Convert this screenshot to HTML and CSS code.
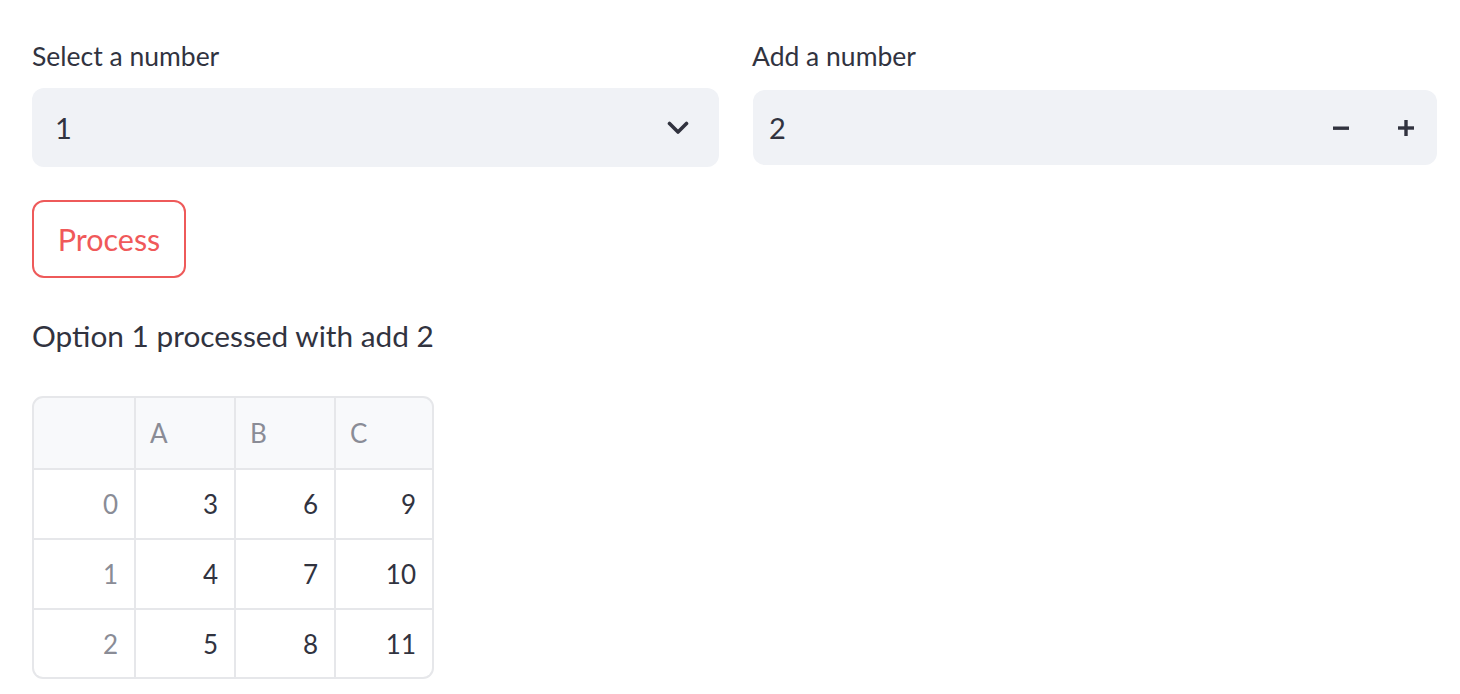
FILE: index.html
```html
<!DOCTYPE html>
<html>
<head>
<meta charset="utf-8">
<link rel="stylesheet" href="styles.css">
</head>
<body>
<div class="main">
  <div class="row">
    <div class="field">
      <div class="label">Select a number</div>
      <div class="select">
        <span class="value">1</span>
        <svg class="chev" width="22" height="14" viewBox="0 0 22 14"><path d="M2.5 2.5 L11 11 L19.5 2.5" fill="none" stroke="#31333f" stroke-width="3.6" stroke-linecap="round" stroke-linejoin="round"/></svg>
      </div>
    </div>
    <div class="field">
      <div class="label">Add a number</div>
      <div class="number">
        <span class="value">2</span>
        <div class="steps">
          <svg width="18" height="18" viewBox="0 0 18 18"><rect x="1" y="7.5" width="16" height="3.4" fill="#31333f"/></svg>
          <svg width="18" height="18" viewBox="0 0 18 18"><rect x="1" y="7.3" width="16" height="3.4" fill="#31333f"/><rect x="7.3" y="1" width="3.4" height="16" fill="#31333f"/></svg>
        </div>
      </div>
    </div>
  </div>
  <button class="btn">Process</button>
  <p class="result">Option 1 processed with add 2</p>
  <div class="table">
    <div class="hd"></div><div class="hd">A</div><div class="hd">B</div><div class="hd">C</div>
    <div class="idx">0</div><div class="num">3</div><div class="num">6</div><div class="num">9</div>
    <div class="idx">1</div><div class="num">4</div><div class="num">7</div><div class="num">10</div>
    <div class="idx">2</div><div class="num">5</div><div class="num">8</div><div class="num">11</div>
  </div>
</div>
</body>
</html>
```
FILE: styles.css
```css
html, body {
  margin: 0;
  background: #ffffff;
}
body {
  font-family: Lato, "Liberation Sans", sans-serif;
  color: #31333f;
}
.main {
  padding: 39px 23px 0 32px;
}
.row {
  display: grid;
  grid-template-columns: 687px 1fr;
  gap: 33px;
}
.field {
  display: flex;
  flex-direction: column;
}
.label {
  font-size: 26.5px;
  line-height: 34px;
  margin-bottom: 15px;
}
.select {
  height: 79px;
  background: #f0f2f6;
  border-radius: 12px;
  display: flex;
  align-items: center;
  padding: 0 30px 0 23px;
  box-sizing: border-box;
}
.number {
  height: 75px;
  margin-top: 2px;
  background: #f0f2f6;
  border-radius: 12px;
  display: flex;
  align-items: center;
  padding: 0 22px 0 16px;
  box-sizing: border-box;
  margin-left: 1px;
}
.value {
  flex: 1;
  font-size: 29px;
}
.steps {
  display: flex;
  gap: 47px;
}
.btn {
  display: block;
  margin-top: 33px;
  height: 78px;
  width: 154px;
  border: 2px solid #ee5a5a;
  border-radius: 12px;
  background: #fff;
  color: #f0595a;
  font-family: inherit;
  font-size: 30.5px;
  padding: 0;
}
.result {
  margin: 38px 0 0;
  font-size: 29.8px;
  line-height: 40px;
}
.table {
  margin-top: 40px;
  display: grid;
  grid-template-columns: 100px 98px 98px 96px;
  grid-template-rows: 70px 68px 68px 67px;
  gap: 2px;
  width: max-content;
  background: #e6e7ea;
  border: 2px solid #e6e7ea;
  border-radius: 11px;
  overflow: hidden;
  font-size: 26px;
}
.table > div {
  background: #fff;
  display: flex;
  align-items: center;
  padding: 0 16px;
}
.table .hd {
  background: #f8f9fb;
  color: #8a8c96;
  padding-left: 14px;
}
.table .idx {
  color: #8a8c96;
  justify-content: flex-end;
}
.table .num {
  justify-content: flex-end;
}
```
